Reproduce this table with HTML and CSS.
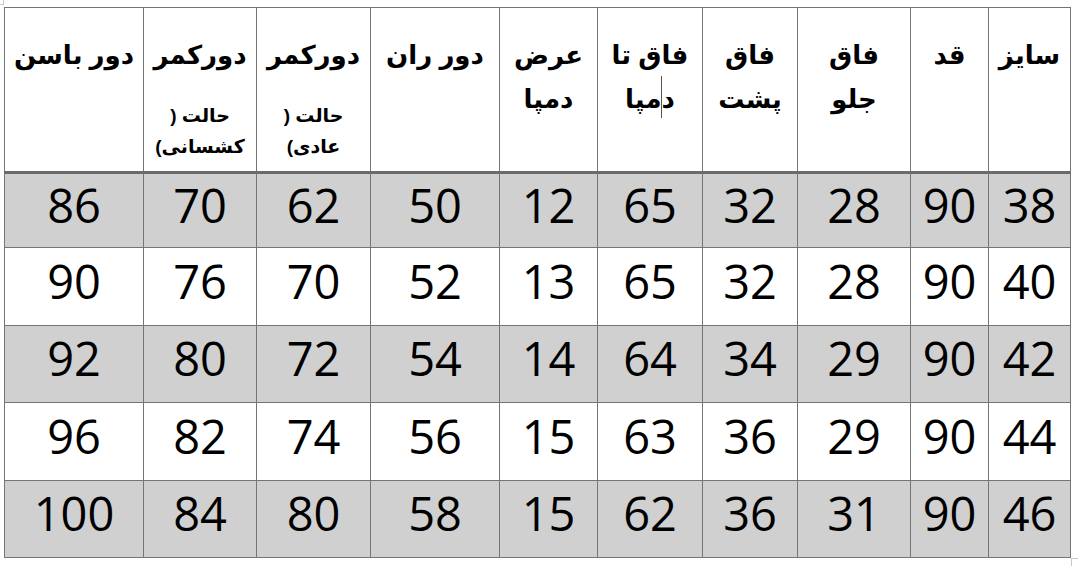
FILE: index.html
```html
<!DOCTYPE html>
<html lang="fa">
<head>
<meta charset="utf-8">
<title>جدول سایز</title>
<link rel="stylesheet" href="styles.css">
</head>
<body>
<div class="page">
  <span class="move-handle"></span>
  <table class="sizes" dir="rtl">
    <colgroup>
      <col class="c82"><col class="c78"><col class="c113"><col class="c95"><col class="c105">
      <col class="c98"><col class="c129"><col class="c114"><col class="c113b"><col class="c139">
    </colgroup>
    <thead>
      <tr class="head">
        <th>سایز</th>
        <th>قد</th>
        <th>فاق<br>جلو</th>
        <th>فاق<br>پشت</th>
        <th class="caret-cell">فاق تا<br>دمپا<span class="caret"></span></th>
        <th>عرض<br>دمپا</th>
        <th>دور ران</th>
        <th>دورکمر<span class="sub">حالت (<br>عادی)</span></th>
        <th>دورکمر<span class="sub">حالت (<br>کشسانی)</span></th>
        <th>دور باسن</th>
      </tr>
    </thead>
    <tbody>
      <tr class="shade r1"><td>38</td><td>90</td><td>28</td><td>32</td><td>65</td><td>12</td><td>50</td><td>62</td><td>70</td><td>86</td></tr>
      <tr class="r2"><td>40</td><td>90</td><td>28</td><td>32</td><td>65</td><td>13</td><td>52</td><td>70</td><td>76</td><td>90</td></tr>
      <tr class="shade r3"><td>42</td><td>90</td><td>29</td><td>34</td><td>64</td><td>14</td><td>54</td><td>72</td><td>80</td><td>92</td></tr>
      <tr class="r4"><td>44</td><td>90</td><td>29</td><td>36</td><td>63</td><td>15</td><td>56</td><td>74</td><td>82</td><td>96</td></tr>
      <tr class="shade r5"><td>46</td><td>90</td><td>31</td><td>36</td><td>62</td><td>15</td><td>58</td><td>80</td><td>84</td><td>100</td></tr>
    </tbody>
  </table>
  <span class="end-mark"></span>
</div>
</body>
</html>
```
FILE: styles.css
```css
html, body {
  margin: 0;
  padding: 0;
  background: #ffffff;
}
.page {
  position: relative;
  width: 1078px;
  height: 566px;
  padding: 7px 0 0 4px;
  box-sizing: border-box;
  overflow: hidden;
}
.move-handle {
  position: absolute;
  left: 0;
  top: 0;
  width: 3px;
  height: 4px;
  border-right: 1px solid #c8c8c8;
  border-bottom: 1px solid #c8c8c8;
}
.end-mark {
  position: absolute;
  left: 1071px;
  top: 558px;
  width: 8px;
  height: 10px;
  border-left: 1px solid #c8c8c8;
  border-top: 1px solid #c8c8c8;
}
.sizes {
  border-collapse: collapse;
  table-layout: fixed;
  width: 1067px;
}
.c82 { width: 82px; }
.c78 { width: 78px; }
.c113 { width: 113px; }
.c95 { width: 95px; }
.c105 { width: 105px; }
.c98 { width: 98px; }
.c129 { width: 129px; }
.c114 { width: 114px; }
.c113b { width: 113px; }
.c139 { width: 139px; }
.sizes th,
.sizes td {
  border: 1px solid #757575;
  padding: 0;
  text-align: center;
  color: #000;
}
.head th {
  height: 165px;
  vertical-align: top;
  padding-top: 25px;
  font-family: "Liberation Sans", "DejaVu Sans", sans-serif;
  font-weight: bold;
  font-size: 26px;
  line-height: 44px;
  border-bottom: 3px solid #6a6a6a;
  box-sizing: border-box;
}
.caret-cell {
  position: relative;
}
.caret {
  position: absolute;
  left: 63px;
  top: 68px;
  width: 1px;
  height: 42px;
  background: #555;
}
.sub {
  display: block;
  margin-top: 23px;
  font-size: 19px;
  line-height: 31px;
}
.sizes td {
  font-family: "Open Sans", "Noto Sans", sans-serif;
  font-size: 47px;
  line-height: 1;
  padding-bottom: 11px;
  box-sizing: border-box;
}
.r1 td { height: 75px; }
.r2 td { height: 78px; }
.r3 td { height: 77px; }
.r4 td { height: 78px; }
.r5 td { height: 77px; }
.shade td {
  background: #d0d0d0;
}
```
